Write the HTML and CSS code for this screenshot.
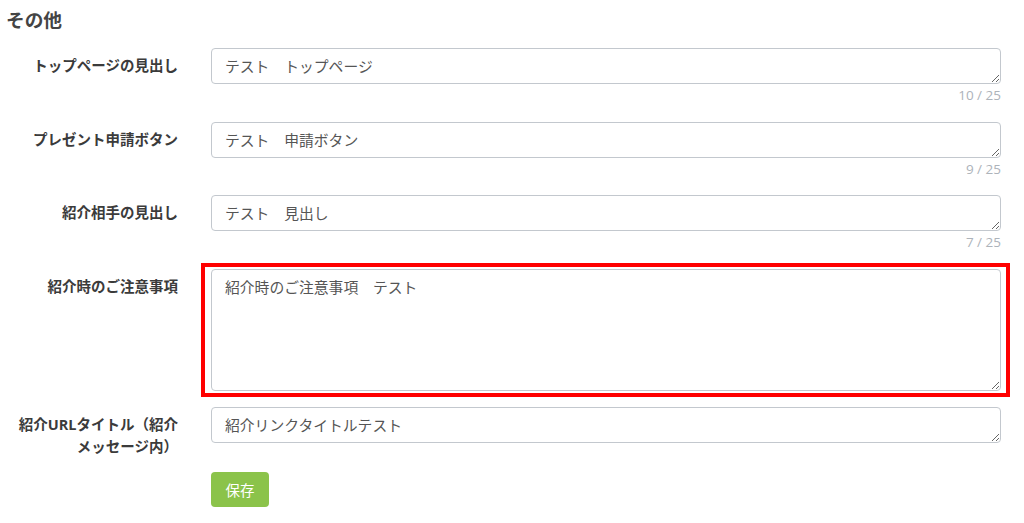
FILE: index.html
```html
<!DOCTYPE html>
<html lang="ja">
<head>
<meta charset="UTF-8">
<meta name="viewport" content="width=device-width, initial-scale=1.0">
<title>その他</title>
<link rel="stylesheet" href="styles.css">
</head>
<body>

<div class="section">
    <h3 class="section-title">その他</h3>

    <div class="form-row">
        <label class="form-label" for="topHeading">トップページの見出し</label>
        <div class="form-field">
            <textarea id="topHeading" rows="1">テスト　トップページ</textarea>
            <div class="counter">10 / 25</div>
        </div>
    </div>

    <div class="form-row">
        <label class="form-label" for="presentButton">プレゼント申請ボタン</label>
        <div class="form-field">
            <textarea id="presentButton" rows="1">テスト　申請ボタン</textarea>
            <div class="counter">9 / 25</div>
        </div>
    </div>

    <div class="form-row">
        <label class="form-label" for="partnerHeading">紹介相手の見出し</label>
        <div class="form-field">
            <textarea id="partnerHeading" rows="1">テスト　見出し</textarea>
            <div class="counter">7 / 25</div>
        </div>
    </div>

    <div class="form-row">
        <label class="form-label" for="notice">紹介時のご注意事項</label>
        <div class="form-field highlight">
            <textarea id="notice" class="tall">紹介時のご注意事項　テスト</textarea>
        </div>
    </div>

    <div class="form-row">
        <label class="form-label" for="urlTitle">紹介URLタイトル（紹介メッセージ内）</label>
        <div class="form-field">
            <textarea id="urlTitle" rows="1">紹介リンクタイトルテスト</textarea>
        </div>
    </div>

    <div class="form-actions">
        <button class="btn-save">保存</button>
    </div>
</div>

</body>
</html>
```

FILE: styles.css
```css
body {
    margin: 0;
    font-family: "Open Sans", "Noto Sans CJK JP", sans-serif;
    color: #333;
    background: #fff;
}

.section {
    padding: 6px 23px 0 0;
}

.section-title {
    margin: 0 0 14px 6px;
    font-size: 18.7px;
    line-height: 28px;
    font-weight: bold;
    color: #444;
}

.form-row {
    display: grid;
    grid-template-columns: 178px 1fr;
    column-gap: 33px;
    margin-bottom: 16px;
}

.form-label {
    padding: 7px 0 0 8px;
    text-align: right;
    font-size: 14.5px;
    line-height: 22px;
    font-weight: bold;
    color: #3b3b3b;
}

.form-field {
    position: relative;
}

textarea {
    display: block;
    width: 100%;
    height: 36px;
    padding: 6px 13px;
    border: 1px solid #c3c8ce;
    border-radius: 4px;
    box-sizing: border-box;
    font-family: "Open Sans", "Noto Sans CJK JP", sans-serif;
    font-size: 14.8px;
    line-height: 22px;
    color: #555;
    resize: vertical;
}

textarea.tall {
    height: 122px;
}

.counter {
    height: 21.5px;
    text-align: right;
    font-size: 13.5px;
    line-height: 22px;
    color: #adb3ba;
}

.highlight::after {
    content: "";
    position: absolute;
    top: -6px;
    left: -10px;
    right: -9px;
    bottom: -6px;
    border: 4px solid #f00;
    pointer-events: none;
}

.form-actions {
    margin-top: -2px;
    padding-left: 211px;
}

.btn-save {
    width: 58px;
    height: 35px;
    background-color: #8bc34a;
    color: white;
    border: none;
    border-radius: 4px;
    font-family: "Open Sans", "Noto Sans CJK JP", sans-serif;
    font-size: 14.5px;
    cursor: pointer;
}
```
